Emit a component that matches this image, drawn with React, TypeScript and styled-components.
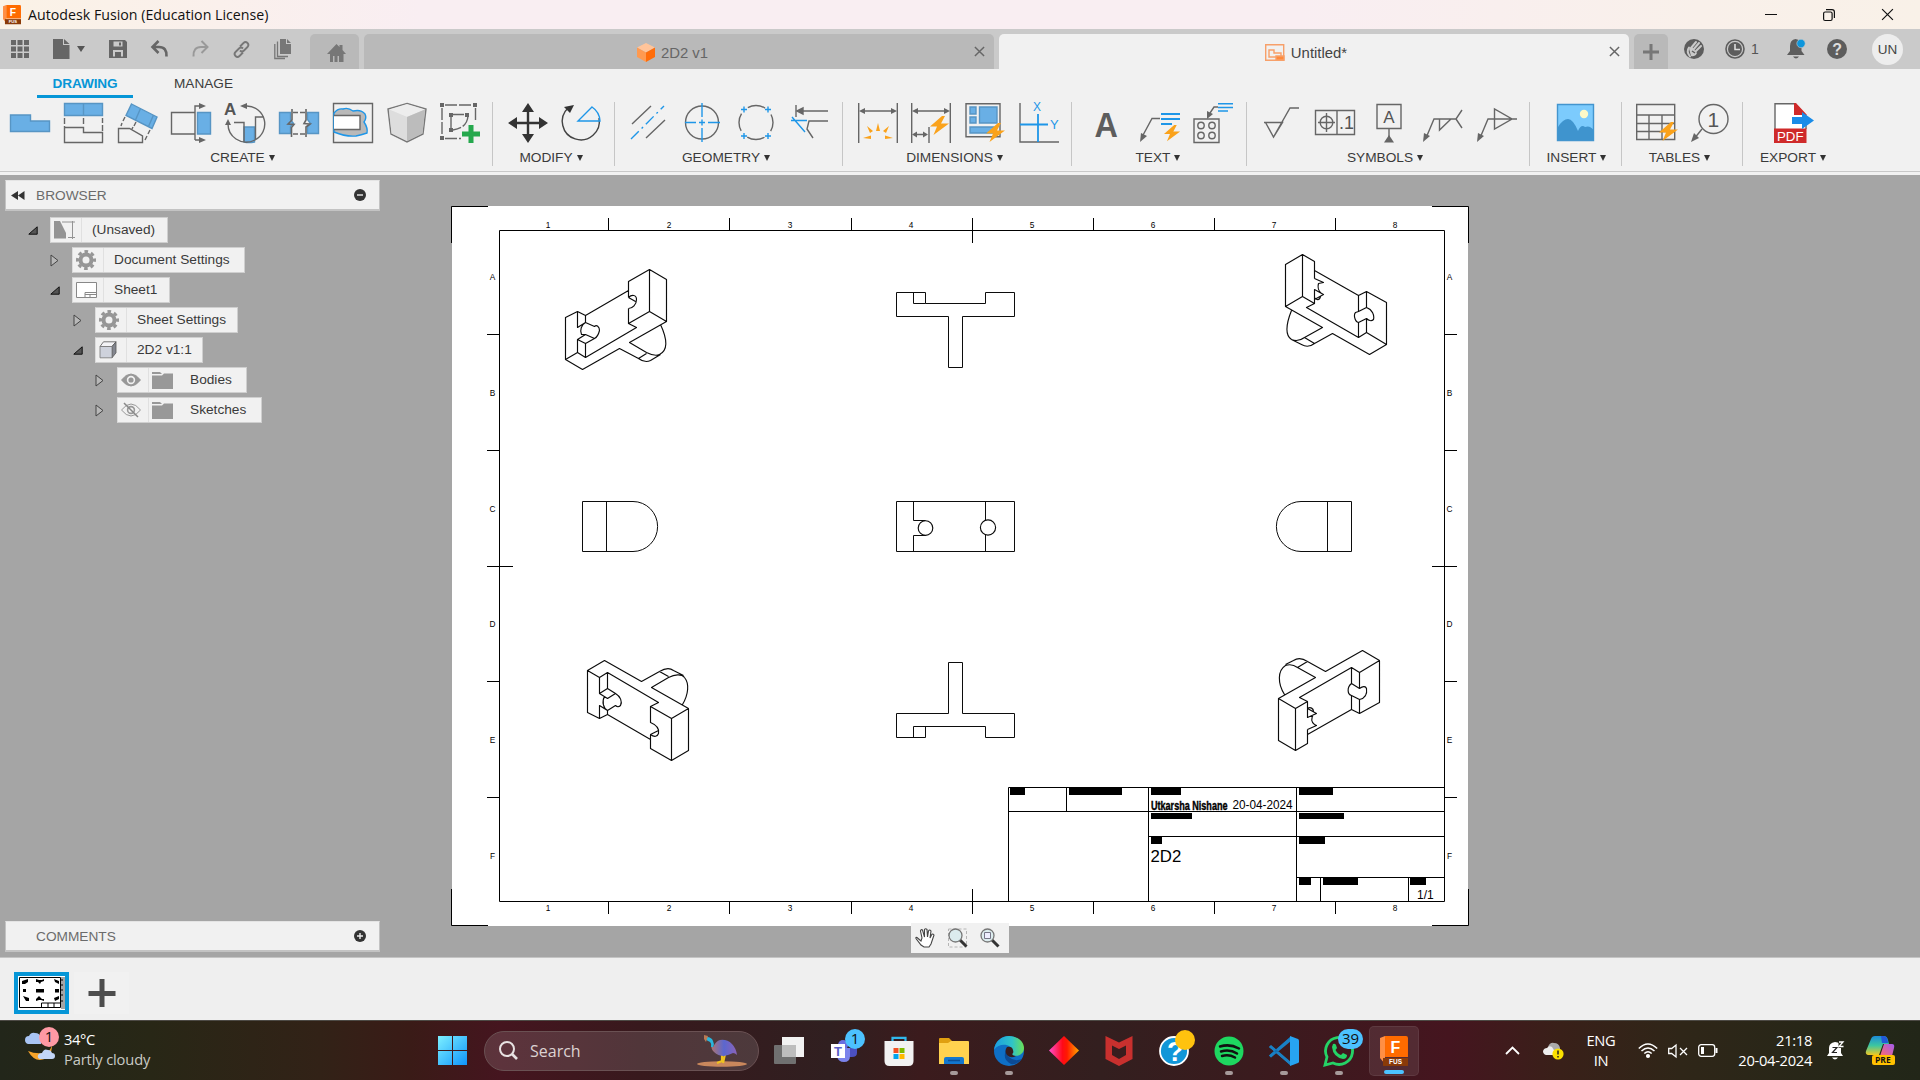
import React from "react";
import styled, { createGlobalStyle } from "styled-components";

const Global = createGlobalStyle`
  * { box-sizing: border-box; }
  body { margin: 0; overflow: hidden; }
  svg { display: block; flex: none; overflow: visible; }
`;

const arial = `"Liberation Sans", Arial, sans-serif`;
const segoe = `"Open Sans", "Noto Sans", sans-serif`;

const G = "#666666";
const B = "#69afe5";
const BD = "#5795c4";
const HB = "#1e96e8";
const O = "#faa21b";

/* ---------- layout ---------- */

const Screen = styled.div`
  width: 1920px;
  height: 1080px;
  display: flex;
  flex-direction: column;
  background: #a5a5a5;
  font-family: ${arial};
  color: #3c3c3c;
`;

const TitleBar = styled.header`
  height: 29px;
  display: flex;
  align-items: center;
  padding-left: 3px;
  background: linear-gradient(90deg, #faf2e6 0, #faf0ec 220px, #f9eef2 420px, #f9eef2 1300px, #f9f0ea 1700px, #f9f1e8 100%);
`;

const TitleText = styled.span`
  margin-left: 7px;
  font: 14.2px ${segoe};
  letter-spacing: 0.01px;
  color: #111;
  flex: 1;
`;

const WindowButton = styled.span`
  width: 58px;
  display: flex;
  justify-content: center;
`;

const TabStrip = styled.div`
  height: 40px;
  display: flex;
  align-items: flex-end;
  background: #cacaca;
`;

const QuickTools = styled.div`
  width: 310px;
  height: 40px;
  padding-left: 10px;
  display: flex;
  align-items: center;
`;

const Quick = styled.span<{ $w: number }>`
  width: ${(p) => p.$w}px;
  flex: none;
`;

const DocTab = styled.div<{ $w: number; $ml?: number; $active?: boolean }>`
  width: ${(p) => p.$w}px;
  margin-left: ${(p) => p.$ml ?? 5}px;
  height: 35px;
  display: flex;
  align-items: center;
  justify-content: center;
  border-radius: 5px 5px 0 0;
  background: ${(p) => (p.$active ? "#f1f1f1" : "#b9b9b9")};
  color: ${(p) => (p.$active ? "#444" : "#666")};
  font-size: 14.9px;
`;

const HomeMark = styled.span`
  padding: 3px 0 0 3px;
`;

const TabName = styled.div<{ $pad: number }>`
  flex: 1;
  display: flex;
  align-items: center;
  justify-content: center;
  gap: 6px;
  padding: 2px 0 0 ${(p) => p.$pad}px;
`;

const TabClose = styled.span`
  width: 20px;
`;

const Account = styled.div`
  height: 40px;
  flex: 1;
  display: flex;
  align-items: center;
  padding-left: 16px;
  font-size: 14px;
  color: #555;
`;

const Avatar = styled.span`
  width: 31px;
  height: 31px;
  border-radius: 50%;
  background: #ededed;
  display: flex;
  align-items: center;
  justify-content: center;
  font-size: 13.5px;
  color: #444;
`;

const Ribbon = styled.section`
  height: 106px;
  background: #f1f1f1;
  position: relative;
  &::after {
    content: "";
    position: absolute;
    left: 0;
    right: 0;
    bottom: 3px;
    height: 1px;
    background: #c8c8c8;
  }
`;

const RibbonTabs = styled.nav`
  height: 29px;
  padding-left: 37px;
  display: flex;
`;

const RibbonTab = styled.span<{ $w: number; $on?: boolean }>`
  width: ${(p) => p.$w}px;
  height: 29px;
  text-align: center;
  line-height: 29px;
  font-size: 13.6px;
  font-weight: ${(p) => (p.$on ? "bold" : "normal")};
  letter-spacing: ${(p) => (p.$on ? "-0.1px" : "0")};
  color: ${(p) => (p.$on ? "#0696d7" : "#3c3c3c")};
  border-bottom: ${(p) => (p.$on ? "3px solid #0696d7" : "0")};
`;

const Groups = styled.div`
  display: flex;
  padding-top: 4px;
`;

const Group = styled.div<{ $w: number; $last?: boolean }>`
  width: ${(p) => p.$w}px;
  height: 64px;
  border-right: ${(p) => (p.$last ? "0" : "1px solid #c6c6c6")};
  display: flex;
  flex-direction: column;
  align-items: center;
`;

const Icons = styled.div<{ $nudge: number }>`
  display: flex;
  gap: 13.8px;
  height: 41px;
  padding-top: 1px;
  margin-left: ${(p) => p.$nudge * 2}px;
`;

const GroupLabel = styled.div<{ $nudge: number }>`
  margin-top: 6px;
  margin-left: ${(p) => p.$nudge * 2}px;
  height: 17px;
  display: flex;
  align-items: center;
  gap: 4px;
  padding-right: 4px;
  font-size: 13.7px;
  color: #3a3a3a;
`;

const Caret = styled.i`
  border: 3.5px solid transparent;
  border-top: 6px solid #333;
  border-bottom: 0;
`;

const Workspace = styled.main`
  height: 782px;
  display: flex;
  position: relative;
  background: #a5a5a5;
`;

const SidePanel = styled.aside`
  width: 451px;
  padding: 5px 71px 5px 5px;
  display: flex;
  flex-direction: column;
`;

const PanelHeader = styled.div`
  height: 31px;
  display: flex;
  align-items: center;
  background: #f1f1f1;
  border: 1px solid #c3c3c3;
  border-bottom-width: 2px;
  border-top-color: #e4e4e4;
  padding-right: 13.5px;
  font-size: 13.7px;
  color: #6b6b6b;
`;

const PanelTitle = styled.span`
  flex: 1;
`;

const PanelLead = styled.span`
  width: 30px;
  padding-left: 5px;
`;

const Tree = styled.div`
  flex: 1;
  padding-top: 6px;
  display: flex;
  flex-direction: column;
  gap: 4px;
`;

const TreeRow = styled.div<{ $indent: number }>`
  height: 26px;
  padding-left: ${(p) => p.$indent}px;
  display: flex;
  align-items: center;
`;

const Expander = styled.span`
  width: 22px;
`;

const Tag = styled.div<{ $w: number }>`
  width: ${(p) => p.$w}px;
  height: 26px;
  background: #f1f1f1;
  border: 1px solid #cfcfcf;
  border-left-color: #dcdcdc;
  display: flex;
  align-items: center;
  font-size: 13.7px;
  color: #3a3a3a;
  white-space: nowrap;
`;

const TagIcon = styled.span<{ $plain?: boolean }>`
  width: 31px;
  height: 24px;
  padding-left: 3px;
  display: flex;
  align-items: center;
  border-right: ${(p) => (p.$plain ? "0" : "1px solid #e0e0e0")};
`;

const TagText = styled.span`
  padding: 0 0 1px 10px;
`;

const NavBar = styled.div`
  position: absolute;
  left: 911px;
  top: 748px;
  width: 98px;
  height: 30px;
  padding-left: 4px;
  display: flex;
  align-items: center;
  gap: 12.5px;
  background: #f1f1f1;
`;

const SheetHolder = styled.div`
  padding-top: 30px;
`;

const SheetBar = styled.footer`
  height: 63px;
  border-top: 1px solid #c4c4c4;
  background: #efefef;
  display: flex;
  align-items: center;
  padding: 0 14px 0;
  gap: 5px;
`;

const Thumb = styled.div`
  width: 55px;
  height: 42px;
  margin-top: 8px;
  border: 4px solid #0696d7;
  background: #fff;
`;

const AddSheet = styled.div`
  width: 55px;
  height: 42px;
  margin-top: 8px;
  background: #f1f1f1;
  display: flex;
  align-items: center;
  justify-content: center;
`;

const Taskbar = styled.footer`
  height: 60px;
  border-top: 1px solid #4d4a45;
  display: flex;
  align-items: center;
  font-family: ${segoe};
  color: #fff;
  background: linear-gradient(90deg, #22261a 0, #282716 150px, #322217 320px, #3a1b17 410px, #45151f 500px, #38191d 640px, #301f20 830px, #3b1b1d 920px, #331f1f 1100px, #3a1b1e 1250px, #45151f 1450px, #392019 1560px, #2f2618 1680px, #232718 1880px, #222618 100%);
`;

const Weather = styled.div`
  width: 433px;
  height: 59px;
  padding: 5px 0 0 25px;
  display: flex;
  gap: 3px;
`;

const WeatherText = styled.div`
  padding-top: 3px;
  font-size: 14.7px;
  line-height: 20px;
  letter-spacing: -0.14px;
  color: #c9cac4;
  b {
    display: block;
    font-weight: normal;
    color: #fff;
    letter-spacing: -0.4px;
  }
`;

const StartBox = styled.div`
  width: 51px;
  padding-left: 5px;
`;

const SearchBox = styled.div`
  width: 275px;
  height: 40px;
  border-radius: 20px;
  border: 1px solid #6a5153;
  background: rgba(255, 255, 255, 0.13);
  display: flex;
  align-items: center;
  padding: 0 10px 0 14px;
  font-size: 16px;
  color: #dcd2d2;
  span {
    flex: 1;
    padding-left: 12px;
  }
`;

const Apps = styled.div`
  display: flex;
  gap: 5px;
  padding-left: 5px;
`;

const AppButton = styled.div<{ $state?: "run" | "on" }>`
  width: 50px;
  height: 50px;
  border-radius: 5px;
  display: flex;
  flex-direction: column;
  align-items: center;
  padding-top: 9px;
  background: ${(p) => (p.$state === "on" ? "rgba(255,255,255,.09)" : "none")};
  border: 1px solid ${(p) => (p.$state === "on" ? "rgba(255,255,255,.07)" : "transparent")};
  gap: 5px;
  &::after {
    content: "";
    width: ${(p) => (p.$state === "on" ? 20 : 8)}px;
    height: 4px;
    border-radius: 2px;
    background: ${(p) => (p.$state === "on" ? "#4cc2ff" : p.$state ? "#a69a9a" : "none")};
  }
`;

const Tray = styled.div`
  flex: 1;
  display: flex;
  align-items: center;
  padding-left: 86px;
`;

const Slot = styled.span<{ $w: number }>`
  width: ${(p) => p.$w}px;
  flex: none;
`;

const TrayText = styled.div<{ $w: number; $align: string }>`
  width: ${(p) => p.$w}px;
  text-align: ${(p) => p.$align};
  font-size: 14.7px;
  line-height: 20px;
  letter-spacing: -0.3px;
  white-space: nowrap;
  padding-bottom: 1px;
`;

/* ---------- drawing sheet ---------- */

/* Converts third-of-a-pixel measurements into strokes centred on pixels. */
const trace = (ox: number, oy: number, d: string) =>
  d.replace(/(-?\d+),(-?\d+)/g, (_, x, y) => `${ox + Math.floor(+x / 3) + 0.5},${oy + Math.floor(+y / 3) + 0.5}`);

const isoViews = [
  trace(440, 200, `M437,347 L413,334 L377,352 L377,478 L428,508 L539,445 L596,476 C606,483 618,487 630,480 L662,463
    M413,334 L413,382 L437,368 L437,347 L566,271 M566,292 L566,244 L628,208 L680,238 L680,364 L628,334 L566,371 L566,326
    M628,208 L628,334 M566,371 L590,382 L437,472 L413,457 L377,478 M680,364 L568,427 L618,456 C630,464 645,468 658,464 C682,452 683,418 662,374
    M594,474 L620,460 M413,457 L413,417 L437,404 L462,416 L437,430 L413,417 M437,430 L437,472
    M437,368 L462,380 C470,373 477,378 477,392 C475,404 470,411 462,416 M437,368 C423,374 419,390 424,402 L437,404
    M566,292 C574,284 590,282 590,298 C588,312 578,326 566,326 M566,292 L586,304`),
  trace(960, 200, `M1063,234 L1063,184 L1027,163 L977,192 L977,320 L1027,289 L1063,310 L1063,268 L1090,283 L1063,298 M1027,163 L1027,289
    M977,320 L1087,382 L1033,412 L1063,430 L1117,400 L1229,463 L1280,433 L1280,306 L1219,274 L1196,286 L1063,211
    M1063,310 L1040,322 L1196,412 L1219,398 L1280,433 M1196,286 L1196,334 M1219,274 L1219,322 M1196,367 L1196,412 M1219,355 L1219,398
    M1196,334 L1219,322 C1236,328 1242,345 1240,358 C1234,363 1226,360 1219,355 L1196,367 C1184,364 1180,344 1187,337 L1196,334
    M1063,234 L1090,247 L1076,250 C1072,262 1076,276 1090,283 M1063,292 C1070,302 1078,300 1082,288
    M993,330 C975,375 975,405 995,418 C1010,424 1022,420 1033,412 M995,418 L1025,434 C1038,441 1050,439 1063,430`),
  trace(440, 560, `M479,475 L443,457 L443,331 L493,301 L604,364 L658,334 C672,324 688,322 700,330 L730,346 M658,334 L686,350
    M443,331 L479,352 L503,338 L656,427 L632,438 L695,474 L746,445 L635,382 L686,352 C704,342 724,341 733,352 C748,370 744,402 728,434
    M479,352 L479,400 L503,386 L503,338 M503,386 L527,400 L503,415 L479,400 M527,400 C540,408 546,425 541,437 C535,441 530,438 526,436 L503,450 C490,445 484,425 492,410
    M503,450 L479,436 L479,475 L503,463 L503,450 M503,463 L632,538 M632,438 L632,488 C645,492 657,505 654,520 C652,530 642,532 632,522 L654,511
    M632,522 L632,566 L695,601 L746,571 L746,445 M695,474 L695,601`),
  trace(980, 620, `M895,235 L947,265 L983,244 L958,232 L1115,142 L1139,157 L1199,121 L1147,91 L1036,154 L982,124 C965,112 950,115 940,120 L915,133
    M983,328 L983,370 L947,391 L895,361 L895,235 L1006,172 L952,142 C940,133 925,132 915,136 C892,152 893,190 912,223 M947,265 L947,391 M952,142 L982,124
    M983,244 L983,292 L1008,280 L983,266 C990,258 1000,264 1001,274 M1001,284 C992,296 994,308 1002,314 L1010,315 L983,328
    M983,343 L1115,268 L1139,280 L1199,247 L1199,121 M1115,142 L1115,190 L1139,205 L1139,157 M1115,227 L1115,268 M1139,238 L1139,280
    M1139,205 C1146,198 1156,196 1159,206 C1162,222 1152,236 1139,238 L1115,227 C1102,222 1100,202 1115,190`),
];

const orthoViews = `M896.5 292.5H925.5V303.5H985.5V292.5H1014.5V316.5H962.5V367.5H948.5V316.5H896.5Z M913.5 292.5V303.5H925.5
  M896.5 501.5H1014.5V551.5H896.5Z M913.5 501.5V520.5H925.5 M925.5 535.5H913.5V551.5 M985.5 501.5V520.5 M985.5 534.5V551.5
  M948.5 662.5H962.5V713.5H1014.5V737.5H985.5V726.5H913.5V737.5 M948.5 662.5V713.5H896.5V737.5H925.5V726.5
  M633 501.5H582.5V551.5H633A24.6 25 0 0 0 633 501.5 M606.5 501.5V551.5
  M1301 501.5H1351.5V551.5H1301A24.6 25 0 0 1 1301 501.5 M1327.5 501.5V551.5`;

const cols = [608.5, 729.5, 851.5, 972.5, 1093.5, 1214.5, 1335.5];
const rows = [334.5, 450.5, 566.5, 681.5, 797.5];

const frame =
  `M499.5 230.5H1444.5V901.5H499.5Z` +
  cols.map((x) => `M${x} 218V${x === 972.5 ? 243 : 230}M${x} ${x === 972.5 ? 889 : 901}V914`).join("") +
  rows.map((y) => `M487 ${y}H${y === 566.5 ? 513 : 499}M${y === 566.5 ? 1432 : 1444} ${y}H1457`).join("") +
  `M451.5 243V206.5H488 M1432 206.5H1468.5V243 M451.5 889V925.5H488 M1432 925.5H1468.5V889` +
  `M1008.5 901V787.5H1444 M1008.5 811.5H1444 M1148.5 836.5H1444 M1296.5 877.5H1444 M1066.5 787V811 M1148.5 787V901 M1296.5 787V901 M1320.5 877V901 M1408.5 877V901`;

const blocks = [
  [1010, 788, 15, 7], [1069, 788, 53, 7], [1151, 788, 30, 7], [1299, 788, 34, 7],
  [1151, 813, 41, 6], [1299, 813, 45, 6], [1151, 837, 11, 7], [1299, 837, 26, 7],
  [1299, 878, 12, 7], [1323, 878, 35, 7], [1410, 878, 16, 7],
];

const Sheet = () => (
  <svg width="1019" height="722" viewBox="451 205 1019 722" fontFamily={arial} fill="#000">
    <rect x="452" y="206" width="1016" height="720" fill="#fff" />
    <path d={frame} fill="none" stroke="#000" />
    <path d={orthoViews} fill="none" stroke="#0c0c0c" />
    <g fill="none" stroke="#0c0c0c" strokeWidth="1.15" strokeLinejoin="round">
      <circle cx="925.5" cy="528" r="7.3" />
      <circle cx="988" cy="527.5" r="7.6" />
      {isoViews.map((d, i) => <path key={i} d={d} />)}
    </g>
    {blocks.map(([x, y, w, h]) => <rect key={`${x}-${y}`} x={x} y={y} width={w} height={h} />)}
    <g fontSize="8.3" textAnchor="middle">
      {[1, 2, 3, 4, 5, 6, 7, 8].map((n) => (
        <React.Fragment key={n}>
          <text x={427 + n * 121} y="228">{n}</text>
          <text x={427 + n * 121} y="911">{n}</text>
        </React.Fragment>
      ))}
      {["A", "B", "C", "D", "E", "F"].map((c, i) => (
        <React.Fragment key={c}>
          <text x="492.5" y={280 + i * 115.8}>{c}</text>
          <text x="1449.5" y={280 + i * 115.8}>{c}</text>
        </React.Fragment>
      ))}
    </g>
    <text transform="translate(1151 809.500) scale(.755 1)" fontSize="12" fontWeight="bold" stroke="#000" strokeWidth=".4">Utkarsha Nishane</text>
    <text transform="translate(1232.5 809) scale(.98 1)" fontSize="12">20-04-2024</text>
    <text x="1150.5" y="862" fontSize="16.8">2D2</text>
    <text x="1417" y="899" fontSize="12">1/1</text>
  </svg>
);

/* ---------- ribbon icons ---------- */

const I = ({ children }: { children: React.ReactNode }) => (
  <svg width="40" height="40" viewBox="0 0 40 40" fill="none" stroke={G} strokeWidth="1.4" fontFamily={arial}>{children}</svg>
);
const Bolt = ({ x, y }: { x: number; y: number }) => (
  <path transform={`translate(${x} ${y})`} d="M12 0 0 10.5h7L3.5 19 19 7.5h-8L15 0Z" fill={O} stroke="none" />
);

const create = [
  <I><path d="M.5 12h20v6h19v10.5H.5Z" fill={B} stroke={BD} /></I>,
  <I>
    <path d="M.5.5h38v12H.5ZM19.5.5v12" fill={B} stroke={BD} />
    <path d="M.5 15v6m0 3v-1M19.5 15v6m19-6v5m0 2v6M.5 24.5h19v5h19v10H.5Z" />
  </I>,
  <I>
    <path d="M13.5 1 39 14l-5 11.5L8 12.5ZM22.5 5.5l-5 11.5M35.5 12l-5 11.5" fill={B} stroke={BD} />
    <path d="M.5 25.5h11l13 7.5v6.5H.5ZM7 14l-2 4m-1 2-1 3M18 19l-2 4m-1 1-1 2M32 27l-2 4m-1 2-2 4" />
  </I>,
  <I>
    <path d="M23.5 9.5H.5V31h23M24 37V3h6M24 37h6" />
    <path d="M26.5 9.5h13V31h-13Z" fill={B} stroke={BD} />
    <path d="m28 0 7 3-7 3Zm0 34 7 3-7 3Z" fill={G} stroke="none" />
  </I>,
  <I>
    <path d="M19 24h10.5v15q-6 1-10.5 0Z" fill={B} stroke={BD} />
    <path d="M22 3a18 18 0 0 1 8 34q-10 5-19-1a18 18 0 0 1-8-15M9 19.5h10V39M39 14h-8.5v23" />
    <path d="m22 0-7 3 7 3ZM0 22l3-6 3 6Z" fill={G} stroke="none" />
    <text x="-1" y="12" fontSize="17" fontWeight="bold" fill="#555" stroke="none">A</text>
  </I>,
  <I>
    <path d="M.5 9.5h11v7l3 4-3 3v7H.5ZM39.5 9.5h-11v7l3 4-3 3v7h11Z" fill={B} stroke={BD} />
    <path d="M13 6v11l-4 4 6 .5-2.5 3V34M27 6v11l-2 3.5 6 .5-4 3V34" strokeWidth="1.6" />
    <path d="M14 9.5h12M14 31h12" strokeDasharray="5 2" />
  </I>,
  <I>
    <path d="M.5.5h39v39H.5Z" />
    <path d="M1 10q4-5 9-4 5-2 10 2 8-2 12 3 2 4-1 8 4 6 3 11-6 2-11 3Q13 34 1 29Z" fill="#b9b9b9" stroke={HB} />
    <path d="M1 12.5h26v14H1" fill="#fff" />
  </I>,
  <I>
    <path d="M20 .5 39 6l-3 25-16 8L4 31 1 6Z" fill="#d4d4d4" stroke="#777" />
    <path d="M2 6.5 20 14v24L4.5 30.5Z" fill="#ddd" stroke="none" />
    <path d="M20 1 38 6.5 20 14 2 6.5Z" fill="#ededed" stroke="none" />
    <path d="M38 6.5 20 14v24l15.5-7.5Z" fill="#bcbcbc" stroke="none" />
  </I>,
  <I>
    <path d="M5 2h27M2 5v27M35.5 5v14M5 35.5h16M12 11.5h14M11 13v13M28 13q-1 12-15 14" strokeDasharray="12 2" />
    <path d="M0 0h4v4H0ZM33 0h4v4h-4ZM0 33h4v4H0ZM9 10h4v4H9ZM25 10h4v4h-4ZM9 25h4v4H9Z" fill={G} stroke="none" />
    <path d="M31 22v18M22 31h18" stroke="#25a84d" strokeWidth="5" />
  </I>,
];

const modify = [
  <I>
    <path d="M20 5v30M5 20h30" stroke="#333" strokeWidth="2.4" />
    <path d="m20 0 6 9H14ZM20 40l6-9H14ZM0 20l9-6v12ZM40 20l-9-6v12Z" fill="#333" stroke="none" />
  </I>,
  <I>
    <path d="M7 5A18.5 18.5 0 1 0 38 15" stroke="#444" />
    <path d="m3 4 10-2-4 8Z" fill="#333" stroke="none" />
    <path d="M31 4 17 18h22A18 18 0 0 0 31 4Z" stroke={HB} />
  </I>,
];

const geometry = [
  <I>
    <path d="M4 21 23 3M18 35 37 17" />
    <path d="M3 36 36 3" stroke={HB} strokeDasharray="11 4 2 4" />
  </I>,
  <I>
    <circle cx="20" cy="19.5" r="16.5" />
    <path d="M20 0v14M20 25v14M3 19.5h11M26 19.5h12M17 19.5h6M20 16.5v6" stroke={HB} />
  </I>,
  <I>
    <circle cx="21" cy="19.5" r="17" strokeDasharray="18 8.7" strokeDashoffset="9" />
    <path d="M6 6.5h6M9 3.5v6M30 6.5h6M33 3.5v6M6 33h6M9 30v6M30 33h6M33 30v6" stroke={HB} />
  </I>,
  <I>
    <path d="M7 2v12M10 8h29M39 18H20l-2 8 6 9" />
    <path d="m8 8 6-3v6Z" fill={G} />
    <path d="M2 17.5h16M3 14l13 15" stroke={HB} />
  </I>,
];

const dimensions = [
  <I>
    <path d="M.7 0v40M39.3 0v40M4 8h32" />
    <path d="m1 8 6-3v6ZM39 8l-6-3v6Z" fill={G} stroke="none" />
    <path d="m20 20-2 8h4ZM9 23l3 7 3-2ZM31 23l-6 5 3 2ZM5 35l8-2.500V36ZM35 35l-8-2.500V36Z" fill={O} stroke="none" />
  </I>,
  <I>
    <path d="M.7 0v40M39.3 0v40M4 8h32M18 24v16M4 31.5h10" />
    <path d="m1 8 6-3v6ZM39 8l-6-3v6ZM1 31.5l5-3v6ZM17 31.5l-5-3v6Z" fill={G} stroke="none" />
    <Bolt x={19} y={13} />
  </I>,
  <I>
    <path d="M1 .7h34v33H1Z" />
    <path d="M5 4h6v7H5ZM14.5 4H32v16H14.5ZM5 14h6v6H5ZM5 24h24v6H5Z" fill={B} stroke={BD} />
    <Bolt x={21} y={20} />
  </I>,
  <I>
    <path d="M1 0v39h39" />
    <path d="M1 21.5h28M19 11v28" stroke={HB} strokeWidth="1.8" />
    <text x="14" y="8" fontSize="12" fill={HB} stroke="none">X</text>
    <text x="31" y="26" fontSize="13" fill={HB} stroke="none">Y</text>
  </I>,
];

const textIcons = [
  <I><text transform="translate(8.5 34) scale(.9 1)" fontSize="36" fontWeight="bold" fill="#5d5d5d" stroke="none">A</text></I>,
  <I>
    <path d="M2 34 12 15.5h8" />
    <path d="m0 39 1-9 6 3Z" fill={G} stroke="none" />
    <path d="M21 11h19M21 16h19M21 21h11" stroke={HB} strokeWidth="2.2" />
    <g transform="translate(24 22) scale(.85)"><Bolt x={0} y={0} /></g>
  </I>,
  <I>
    <path d="M1 16h25v23.5H1ZM17 10l4-6h4" />
    <path d="m14 16 0-8 6 3Z" fill={G} stroke="none" />
    <circle cx="8" cy="22.5" r="3.2" /><circle cx="19" cy="22.5" r="3.2" />
    <circle cx="8" cy="32.5" r="3.2" /><circle cx="19" cy="32.5" r="3.2" />
    <path d="M25 .8h15M25 4.5h15M25 8h10" stroke={HB} strokeWidth="1.6" />
  </I>,
];

const symbols = [
  <I><path d="M3 19.5h18.500L12.500 34 4.500 19.5M12.500 34 29 5h9" /></I>,
  <I>
    <path d="M.5 7.500h39v24H.5ZM22 7.500v24M11.500 10v19M3 19.500h17" />
    <circle cx="11.5" cy="19.5" r="6.3" />
    <text x="24" y="26" fontSize="18" fill="#555" stroke="none">.1</text>
  </I>,
  <I>
    <path d="M8 1.5h24v24H8ZM20 25.5V35" />
    <path d="m20 32 5 7.5H15Z" fill={G} stroke="none" />
    <text x="14.2" y="20" fontSize="17" fill="#555" stroke="none">A</text>
  </I>,
  <I>
    <path d="M3 35 11 16h22l6-9M33 16l6 9M16.5 16v11L28 16" />
    <path d="m0 39 1-9 6 3Z" fill={G} stroke="none" />
  </I>,
  <I>
    <path d="M3 35 11 16h29M17.5 6v20L35 16Z" />
    <path d="m0 39 1-9 6 3Z" fill={G} stroke="none" />
  </I>,
];

const insert = [
  <I>
    <path d="M1.5 1.5h36v36h-36Z" fill="#7ccbfd" stroke="#4395ce" />
    <path d="M2 24Q7 16 12 16t10 12q3-7 7-4 5-2 8.500 3v10H2Z" fill="#3f94ce" stroke="none" />
    <circle cx="28" cy="11" r="4.2" fill="#fdf9c8" stroke="none" />
  </I>,
];
const tables = [
  <I>
    <path d="M.7 1.5h38v35H.7ZM.7 12h38M.7 20.5h38M.7 28.5h38M13 12v24.5M26 12v24.5" />
    <Bolt x={23} y={19} />
  </I>,
  <I>
    <circle cx="23.5" cy="16" r="14.5" />
    <path d="M4 36 12 26" />
    <path d="m1 39 3-9 5 5Z" fill={G} stroke="none" />
    <text x="17.5" y="23.5" fontSize="21" fill="#555" stroke="none">1</text>
  </I>,
];
const exportIcons = [
  <I>
    <path d="M1 40V.7h20l11 12V26" fill="#fff" />
    <path d="M20 0h2l11 12h-13Z" fill="#cf2a2a" stroke="none" />
    <path d="M0 25.5h32.5V40H0Z" fill="#cf2a2a" stroke="none" />
    <path d="M18 14h10V9l12 8.5L28 26v-5H18Z" fill="#1a8ce8" stroke="none" />
    <text x="3" y="37.5" fontSize="13.3" fill="#fff" stroke="none">PDF</text>
  </I>,
];

/* name, width, icons, icon nudge, label nudge */
const groups: [string, number, React.ReactNode[], number, number][] = [
  ["CREATE", 493, create, -0.8, -1.5],
  ["MODIFY", 122, modify, 1, -0.5],
  ["GEOMETRY", 228, geometry, 0, -0.5],
  ["DIMENSIONS", 229, dimensions, 1.2, -0.5],
  ["TEXT", 175, textIcons, 0.6, 1],
  ["SYMBOLS", 283, symbols, 1, -1],
  ["INSERT", 92, insert, 0, 3],
  ["TABLES", 121, tables, 1.2, -0.5],
  ["EXPORT", 102, exportIcons, -0.5, 1],
];

/* ---------- small icons ---------- */

const Fusion = ({ s }: { s: number }) => (
  <svg width={s} height={s * 1.07} viewBox="0 0 28 30">
    <path d="M0 2 5 0v28L0 22Z" fill="#ff8f45" />
    <path d="M5 0h21q2 0 2 2v19H5Z" fill="#ff6b00" />
    <path d="M3 22h25v8H3Z" fill="#8a3a08" />
    <text x="10.5" y="17" fontFamily={arial} fontWeight="bold" fontSize="16" fill="#fff">F</text>
    <text x="9" y="28.5" fontFamily={arial} fontWeight="bold" fontSize="6.5" fill="#fff">FUS</text>
  </svg>
);

const X = ({ s = 11, c = "#666", w = 1.6 }) => (
  <svg width={s} height={s} viewBox="0 0 12 12"><path d="m1 1 10 10M11 1 1 11" stroke={c} strokeWidth={w} /></svg>
);

const Open = () => (
  <svg width="10" height="9" viewBox="0 0 10 9"><path d="M9.2.8v7.400H.8Z" fill="#555" stroke="#111" /></svg>
);
const Closed = () => (
  <svg width="9" height="13" viewBox="0 0 9 13"><path d="M1 1v11l7-5.5Z" fill="#b8b8b8" stroke="#444" /></svg>
);
const Gear = () => (
  <svg width="20" height="20" viewBox="0 0 20 20">
    <circle cx="10" cy="10" r="5.5" fill="none" stroke="#969696" strokeWidth="4" />
    <circle cx="10" cy="10" r="8.5" fill="none" stroke="#969696" strokeWidth="3" strokeDasharray="3.6 3.076" strokeDashoffset="1.8" />
  </svg>
);
const Folder = () => (
  <svg width="21" height="17" viewBox="0 0 21 17"><path d="M0 0h8l2 2H0ZM0 3.5h10L12 1.5h9V17H0Z" fill="#989898" /></svg>
);
const Eye = ({ off }: { off?: boolean }) => (
  <svg width="20" height="14" viewBox="0 0 20 14">
    <path d="M.5 7Q10-5 19.500 7 10 19 .5 7Z" fill={off ? "none" : "#989898"} stroke="#989898" />
    <circle cx="10" cy="7" r="3.4" fill={off ? "none" : "#989898"} stroke={off ? "#989898" : "#f1f1f1"} strokeWidth="1.6" />
    {off && <path d="m3 0 14 14" stroke="#888" strokeWidth="1.5" />}
  </svg>
);
const DocIcon = () => (
  <svg width="21" height="18" viewBox="0 0 21 18">
    <path d="M0 0h6l6 12v5.5H0Z" fill="#949494" />
    <path d="M8 1h13M14 16.5h7M18.5 0v18" stroke="#949494" fill="none" />
  </svg>
);
const SheetIcon = () => (
  <svg width="21" height="16" viewBox="0 0 21 16">
    <path d="M.5.5h20v15H.5Z" fill="#fff" stroke="#888" />
    <path d="M9 15v-4.5h11M9 12.5h11M14 12.5V15" stroke="#888" fill="none" />
  </svg>
);
const BodyIcon = () => (
  <svg width="18" height="18" viewBox="0 0 18 18">
    <path d="M1 5.5 4.5.8H17L13 5.5Z" fill="#f3f3f6" stroke="#555" strokeWidth=".8" />
    <path d="M17 .8v11l-4 5V5.5Z" fill="#83868f" stroke="#555" strokeWidth=".8" />
    <path d="M1 5.5h12v11.3H1Z" fill="#ced2dc" stroke="#777" strokeWidth=".8" />
  </svg>
);
const Round = ({ plus }: { plus?: boolean }) => (
  <svg width="12" height="12" viewBox="0 0 12 12">
    <circle cx="6" cy="6" r="6" fill="#333" />
    <path d={plus ? "M3 6h6M6 3v6" : "M3 6h6"} stroke="#eee" strokeWidth="1.4" />
  </svg>
);

const tree: { indent: number; open?: boolean; w: number; label: string; icon?: React.ReactNode; eye?: "on" | "off" }[] = [
  { indent: 23, open: true, w: 118, label: "(Unsaved)", icon: <DocIcon /> },
  { indent: 45, w: 173, label: "Document Settings", icon: <Gear /> },
  { indent: 45, open: true, w: 98, label: "Sheet1", icon: <SheetIcon /> },
  { indent: 68, w: 143, label: "Sheet Settings", icon: <Gear /> },
  { indent: 68, open: true, w: 108, label: "2D2 v1:1", icon: <BodyIcon /> },
  { indent: 90, w: 130, label: "Bodies", eye: "on" },
  { indent: 90, w: 145, label: "Sketches", eye: "off" },
];

const Lens = ({ win }: { win?: boolean }) => (
  <svg width="20" height="20" viewBox="0 0 20 20">
    {win && <path d="M.5 1h18v18H.5Z" fill="none" stroke="#b5b5b5" strokeDasharray="3 2" />}
    <path d="m12 12 6.5 6.5" stroke="#333" strokeWidth="3" />
    <circle cx="7.5" cy="7.5" r="6.5" fill="#dcecee" stroke="#777" strokeWidth="1.3" />
    {!win && <path d="M4.5 4.5h6v6h-6Z" fill="#eef" stroke="#778" />}
  </svg>
);

/* ---------- taskbar icons ---------- */

const T = ({ children }: { children: React.ReactNode }) => (
  <svg width="30" height="30" viewBox="0 0 30 30">{children}</svg>
);

const Badge = ({ x, y, w, n, c, f = 15 }: { x: number; y: number; w: number; n: string; c: string; f?: number }) => (
  <g>
    <rect x={x} y={y} width={w} height="20" rx="10" fill={c} />
    <text x={x + w / 2} y={y + 15.3} textAnchor="middle" fontSize={f} fill="#111" fontFamily={segoe}>{n}</text>
  </g>
);

const apps: { icon: React.ReactNode; state?: "run" | "on" }[] = [
  { icon: <T>
    <path d="M8 1h22v20H8Z" fill="#f2f2f2" />
    <rect x="0" y="9" width="22" height="19" rx="1" fill="#707070" />
    <path d="M8 9h14v12H8Z" fill="#bdbdbd" />
  </T> },
  { icon: <T>
    <circle cx="14" cy="9" r="5" fill="#6a6fe0" /><path d="M15 12h13v5q0 4-5 4H13Z" fill="#4b50c0" />
    <path d="M8 12h13v8q0 6-6 6t-7-6Z" fill="#7b83eb" />
    <path d="M2 8h14v14H2Z" fill="#fff" />
    <text x="5" y="19.5" fontFamily={arial} fontWeight="bold" fontSize="13" fill="#5a5fc8">T</text>
    <Badge x={16} y={-7} w={20} n="1" c="#4cc2ff" />
  </T> },
  { icon: <T>
    <path d="M8.5 7V1.8h13V7" fill="none" stroke="#30b8ec" strokeWidth="2.2" />
    <path d="M.5 5h29v20q0 5-5 5h-19q-5 0-5-5Z" fill="#f2f2f2" />
    <path d="M9.5 12h5v5h-5Z" fill="#f25022" /><path d="M15.5 12h5v5h-5Z" fill="#7fba00" />
    <path d="M9.5 18h5v5h-5Z" fill="#00a4ef" /><path d="M15.5 18h5v5h-5Z" fill="#ffb900" />
  </T> },
  { state: "run", icon: <T>
    <path d="M0 3q0-1 1-1h9l3 3v4H0Z" fill="#e0a010" /><path d="M0 7h9l3-2h17q1 0 1 1v22H0Z" fill="#ffd24f" />
    <path d="M5 28v-5q0-2 2-2h16q2 0 2 2v5Z" fill="#1377cf" /><path d="M9 24.5h12" stroke="#0b4f96" strokeWidth="1.5" />
  </T> },
  { state: "run", icon: <T>
    <defs><linearGradient id="edge" x1="0" x2="1"><stop stopColor="#1b9de2" /><stop offset=".6" stopColor="#2fc3c8" /><stop offset="1" stopColor="#6be055" /></linearGradient></defs>
    <circle cx="15" cy="15" r="15" fill="#0f6fc6" />
    <path d="M0 14C1 5 8 0 15 0c9 0 15 6 15 12 0 5-4 8-9 8-3 0-4-1-3-3 3-8-12-12-18-3Z" fill="url(#edge)" />
    <path d="M12 14q-4 10 5 14 6 1 11-5-8 3-13-2-3-3-3-7Z" fill="#0c4a94" />
    <path d="M19 14q1 3-1 4 1 2 4 2-5 3-9-1-3-4 0-8 5-1 6 3Z" fill="#381d1e" />
  </T> },
  { icon: <T>
    <defs><linearGradient id="dia"><stop stopColor="#ff4fd0" /><stop offset=".45" stopColor="#ff0a18" /><stop offset=".6" stopColor="#ff1a00" /><stop offset="1" stopColor="#ffa800" /></linearGradient></defs>
    <path d="m15 0 15 14.5L15 29 0 14.5Z" fill="url(#dia)" />
  </T> },
  { icon: <T>
    <path d="m1.5 0 13.5 6.5L28.5 0v23L15 30 1.5 23Z" fill="#c8302e" />
    <path d="M8 9.5 15 13l7-3.5v9.5l-7 4-7-4Z" fill="#381d1e" />
  </T> },
  { icon: <T>
    <circle cx="15" cy="15" r="14" fill="#1096d8" stroke="#fff" strokeWidth="1.8" />
    <text x="8" y="25" fontFamily={arial} fontWeight="bold" fontSize="27" fill="#fff">?</text>
    <circle cx="26" cy="4" r="10" fill="#ffc20e" />
  </T> },
  { state: "run", icon: <T>
    <circle cx="15" cy="15" r="14.5" fill="#1ed760" />
    <path d="M6 10.5q10-3 19 2M7 15.5q9-2.5 16 2M8 20q7-2 13 1.5" fill="none" stroke="#111" strokeWidth="2.5" strokeLinecap="round" />
  </T> },
  { state: "run", icon: <T>
    <path d="M2 9.5 22 27l-1 2L0 11Z" fill="#2489ca" /><path d="M2 21.5 22 3l-1-2L0 19.5Z" fill="#1070b3" />
    <path d="m0 11 2-2 20 17v3.5ZM0 19.5l2 2L22 5V.5Z" fill="#1a80c4" />
    <path d="m21 0 8 3q1 .5 1 1.5v21q0 1-1 1.5l-8 3Z" fill="#27a4f2" />
  </T> },
  { state: "run", icon: <T>
    <path d="m1 29 2-8A13.5 13.5 0 1 1 9 27Z" fill="none" stroke="#25d366" strokeWidth="2.8" />
    <path d="M9 8q2-1 3 1l1 3-1.5 2q2 4 5.5 5l2-2 4 2q0 4-4 4Q9 21 8 11Z" fill="#25d366" />
    <Badge x={14} y={-7} w={25} n="39" c="#4cc2ff" />
  </T> },
  { state: "on", icon: <Fusion s={28} /> },
];

export default function App() {
  return (
    <Screen>
      <Global />
      <TitleBar>
        <Fusion s={18} />
        <TitleText>Autodesk Fusion (Education License)</TitleText>
        <WindowButton><svg width="12" height="12" viewBox="0 0 12 12"><path d="M0 5.5h12" stroke="#111" /></svg></WindowButton>
        <WindowButton>
          <svg width="12" height="12" viewBox="0 0 12 12" fill="none" stroke="#111" strokeWidth="1.2">
            <rect x=".6" y="3" width="8.5" height="8.5" rx="1.5" /><path d="M3 .6h6q2.4 0 2.4 2.4v6" />
          </svg>
        </WindowButton>
        <WindowButton><X s={13} c="#111" w={1.1} /></WindowButton>
        <Slot $w={4} />
      </TitleBar>

      <TabStrip>
        <QuickTools>
          <Quick $w={43}>
            <svg width="19" height="18" viewBox="0 0 19 18" fill={G}>
              {[0, 1, 2].flatMap((r) => [0, 1, 2].map((c) => <rect key={`${r}${c}`} x={1 + c * 6.5} y={r * 6.5} width="5" height="5" />))}
            </svg>
          </Quick>
          <Quick $w={24}><svg width="17" height="20" viewBox="0 0 17 20"><path d="M0 0h10v6h6.5v14H0ZM11 0l5.5 5H11Z" fill={G} /></svg></Quick>
          <Quick $w={32}><svg width="8" height="6" viewBox="0 0 8 6"><path d="M0 0h8L4 6Z" fill="#555" /></svg></Quick>
          <Quick $w={42}>
            <svg width="18" height="18" viewBox="0 0 18 18"><path d="M0 0h16l2 2v16H0Z" fill={G} /><path d="M4.5 1.5h9v5h-9ZM4 10h10v6.5H4Z" fill="#cacaca" /><path d="M10 2.5h2v3h-2ZM6 12h6v5H6Z" fill={G} /></svg>
          </Quick>
          <Quick $w={41}><svg width="17" height="16" viewBox="0 0 17 16"><path d="M2 6h6q8 0 7.5 9.5M7.5 0 1.5 6l6 6" fill="none" stroke={G} strokeWidth="2.6" /></svg></Quick>
          <Quick $w={41}><svg width="17" height="16" viewBox="0 0 17 16"><path d="M15 6H9q-8 0-7.5 9.5M9.5 0l6 6-6 6" fill="none" stroke="#999" strokeWidth="2" /></svg></Quick>
          <Quick $w={41}>
            <svg width="17" height="17" viewBox="0 0 17 17" fill="none" stroke="#777" strokeWidth="1.8">
              <path d="m7 5.5 3.5-3.5q2-2 4 0t0 4L11 9.5q-2 2-4 0M10 11.5 6.5 15q-2 2-4 0t0-4L6 7.5q2-2 4 0" />
            </svg>
          </Quick>
          <Quick $w={20}>
            <svg width="17" height="20" viewBox="0 0 17 20">
              <path d="M6 0h6v5h5v10H6ZM13 0l4 4h-4Z" fill="#777" />
              <path d="M3.5 2.5v15H14M.8 5v14.5H11" fill="none" stroke="#777" strokeWidth="1.3" />
            </svg>
          </Quick>
        </QuickTools>
        <DocTab $w={49} $ml={0}>
          <HomeMark>
            <svg width="19" height="18" viewBox="0 0 19 18"><path d="M0 10 9.5 0l3 3V1h3v5L19 10h-2.5v8H12v-6h-1.5v6h-3v-6H6v6H3v-8Z" fill="#777" /></svg>
          </HomeMark>
        </DocTab>
        <DocTab $w={630}>
          <TabName $pad={7}>
            <svg width="18" height="19" viewBox="0 0 18 19"><path d="m9 0 9 4.5L9 9.5 0 4.5Z" fill="#ffc49a" /><path d="M0 4.5 9 9.5V19l-9-5Z" fill="#ff9a50" /><path d="M18 4.5 9 9.5V19l9-5Z" fill="#ff6d0a" /></svg>
            2D2 v1
          </TabName>
          <TabClose><X /></TabClose>
        </DocTab>
        <DocTab $w={630} $active>
          <TabName $pad={4}>
            <svg width="20" height="17" viewBox="0 0 20 17" fill="none" stroke="#f7a06a" strokeWidth="1.4"><path d="M.7.7h18v15.6H.7ZM4 6h5v3h7v4H4Z" /><path d="M11 12h8v4h-8Z" fill="#ff8a3c" /></svg>
            Untitled*
          </TabName>
          <TabClose><X /></TabClose>
        </DocTab>
        <DocTab $w={34}>
          <svg width="16" height="16" viewBox="0 0 16 16"><path d="M8 0v16M0 8h16" stroke="#777" strokeWidth="3" /></svg>
        </DocTab>
        <Account>
          <Slot $w={41}>
            <svg width="20" height="20" viewBox="0 0 20 20">
              <circle cx="10" cy="10" r="10" fill="#5d5d5d" />
              <path d="M6 17.500q-4-5-1-9M7 9l5-6M9 11l6-7M11 13l6-6" fill="none" stroke="#cacaca" strokeWidth="2" strokeLinecap="round" />
              <path d="M5 9.500 8 8l5 6q-2 4-6 3Z" fill="#cacaca" />
              <path d="M8 12l3 2" stroke="#5d5d5d" strokeWidth="1.500" />
            </svg>
          </Slot>
          <Slot $w={26}>
            <svg width="20" height="20" viewBox="0 0 20 20"><circle cx="10" cy="10" r="9" fill="#cacaca" stroke="#5d5d5d" strokeWidth="1.6" /><circle cx="10" cy="10" r="7" fill="#5d5d5d" /><path d="M10 5v5.5h5" fill="none" stroke="#ddd" strokeWidth="1.6" /></svg>
          </Slot>
          <Slot $w={36}>1</Slot>
          <Slot $w={40}>
            <svg width="18" height="20" viewBox="0 0 18 20"><path d="M8.5 0q6 1 6 7v5l3 4H0l3-4V7q0-6 5.5-7ZM6 17.5h6q-3 4-6 0Z" fill="#5d5d5d" /><circle cx="14" cy="4.5" r="4.2" fill="#0d96dc" stroke="#cacaca" strokeWidth=".6" /></svg>
          </Slot>
          <Slot $w={45}>
            <svg width="20" height="20" viewBox="0 0 20 20"><circle cx="10" cy="10" r="10" fill="#5d5d5d" /><text x="5.3" y="16" fontFamily={arial} fontWeight="bold" fontSize="16" fill="#ddd">?</text></svg>
          </Slot>
          <Avatar>UN</Avatar>
        </Account>
      </TabStrip>

      <Ribbon>
        <RibbonTabs>
          <RibbonTab $w={96} $on>DRAWING</RibbonTab>
          <RibbonTab $w={141}>MANAGE</RibbonTab>
        </RibbonTabs>
        <Groups>
          {groups.map(([name, w, icons, iconNudge, labelNudge], i) => (
            <Group key={name} $w={w} $last={i === groups.length - 1}>
              <Icons $nudge={iconNudge}>{icons.map((ic, k) => <React.Fragment key={k}>{ic}</React.Fragment>)}</Icons>
              <GroupLabel $nudge={labelNudge}>{name}<Caret /></GroupLabel>
            </Group>
          ))}
        </Groups>
      </Ribbon>

      <Workspace>
        <SidePanel>
          <PanelHeader>
            <PanelLead><svg width="14" height="9" viewBox="0 0 14 9"><path d="M7 0v9L0 4.5ZM13.5 0v9l-6.5-4.5Z" fill="#333" /></svg></PanelLead>
            <PanelTitle>BROWSER</PanelTitle>
            <Round />
          </PanelHeader>
          <Tree>
            {tree.map((r) => (
              <TreeRow key={r.label} $indent={r.indent}>
                <Expander>{r.open ? <Open /> : <Closed />}</Expander>
                <Tag $w={r.w}>
                  <TagIcon>{r.eye ? <Eye off={r.eye === "off"} /> : r.icon}</TagIcon>
                  {r.eye && <TagIcon $plain><Folder /></TagIcon>}
                  <TagText>{r.label}</TagText>
                </Tag>
              </TreeRow>
            ))}
          </Tree>
          <PanelHeader>
            <PanelLead />
            <PanelTitle>COMMENTS</PanelTitle>
            <Round plus />
          </PanelHeader>
        </SidePanel>
        <SheetHolder><Sheet /></SheetHolder>
        <NavBar>
          <svg width="20" height="20" viewBox="0 0 20 20" fill="#fff" stroke="#444" strokeWidth="1.1">
            <path d="M6 13 2 9.5Q.5 9 1 10.5L6 17l3 2h5l2-3 3-9q-1.5-2-2.5 0L15 10l1-7q-1.5-2-2.5 0L12.5 9 12 1.5q-1.5-1.5-2.5 0L9.5 9 7.5 2Q6 1 5.5 3L7 10Z" />
          </svg>
          <Lens win />
          <Lens />
        </NavBar>
      </Workspace>

      <SheetBar>
        <Thumb>
          <svg width="47" height="34" viewBox="0 0 47 34">
            <path d="M43 1h4v32h-4Z" fill="#a5a5a5" />
            <path d="M1.5 1.5h41v30h-41ZM23.5 31v-4h19M30 27v4M36 27v4M42 4h3M42 9h3M42 14h3M42 19h3M42 25h3" fill="none" stroke="#000" />
            <path d="M4 5l6-2v3l-3 2H4ZM18 3l3 1h3l2-1v2l-3 1-1 2-2-2h-2ZM36 3l5 2v3l-4-2ZM5 13h3v3H5ZM18 13h8v3.5h-8ZM37 13h4v3.5h-4ZM5 20l6 2v3H8ZM18 25v-2l3-3 3 3h2v2l-3-1h-2ZM36 22l5-2v3l-4 2Z" fill="#000" />
          </svg>
        </Thumb>
        <AddSheet>
          <svg width="28" height="28" viewBox="0 0 28 28"><path d="M14 0v28M.5 14.5h27" stroke="#4d4d4d" strokeWidth="5" /></svg>
        </AddSheet>
      </SheetBar>

      <Taskbar>
        <Weather>
          <svg width="36" height="36" viewBox="0 0 36 36">
            <path d="M27 14q1 12-9 13-8 1-15-2 5 9 12 9 12-1 12-15Z" fill="#f8a429" />
            <path d="M3 18q-3-1-3-4 0-4 4-4 2-4 6-3 5 0 6 5v6Z" fill="#a8c4f4" />
            <path d="M15 33q-3-1-2-4 1-2 4-2 2-5 6-3 3 0 4 3 3 0 3 3t-3 3Z" fill="#c3d6f7" />
            <Badge x={14} y={1} w={20} n="1" c="#ff99a4" />
          </svg>
          <WeatherText><b>34°C</b>Partly cloudy</WeatherText>
        </Weather>
        <StartBox>
          <svg width="29" height="29" viewBox="0 0 29 29">
            <defs><linearGradient id="win" gradientUnits="userSpaceOnUse" x1="0" y1="0" x2="29" y2="29"><stop stopColor="#7df0ff" /><stop offset="1" stopColor="#0f94fb" /></linearGradient></defs>
            <path d="M0 0h14v14H0ZM15 0h14v14H15ZM0 15h14v14H0ZM15 15h14v14H15Z" fill="url(#win)" />
          </svg>
        </StartBox>
        <SearchBox>
          <svg width="19" height="19" viewBox="0 0 19 19" fill="none" stroke="#e8e2e2" strokeWidth="2"><circle cx="8" cy="8" r="7" /><path d="m13 13 5 5" strokeWidth="2.6" /></svg>
          <span>Search</span>
          <svg width="51" height="32" viewBox="0 0 51 32">
            <defs><linearGradient id="bird"><stop stopColor="#b0756f" /><stop offset=".5" stopColor="#5b67cf" /><stop offset="1" stopColor="#8a63b8" /></linearGradient></defs>
            <ellipse cx="25" cy="29" rx="25" ry="2.8" fill="#c9875c" />
            <path d="M25 19v7l-5 2M28 19l-2 9" stroke="#efc21f" strokeWidth="2.2" fill="none" />
            <path d="M14 9q0 5 3 8 4 4 10 4 5-1 9-3 2 0 4 2-1-7-5-11-5-5-12-4-4 1-7 7Z" fill="url(#bird)" />
            <path d="M8 4q2-4 7 0 3 5 1 8h-2q1-5-3-6Z" fill="#29b5dc" />
            <path d="M7 0 11 1l-2 6-2-3Z" fill="#b97a55" />
          </svg>
        </SearchBox>
        <Apps>
          {apps.map((a, i) => <AppButton key={i} $state={a.state}>{a.icon}</AppButton>)}
        </Apps>
        <Tray>
          <Slot $w={38}><svg width="15" height="9" viewBox="0 0 15 9"><path d="m1 8 6.5-6.5L14 8" fill="none" stroke="#fff" strokeWidth="1.8" /></svg></Slot>
          <Slot $w={40}>
            <svg width="21" height="18" viewBox="0 0 21 18"><path d="M5 5q2-5 6-4 5 0 6 5v6H6Z" fill="#aaa" /><path d="M3 13q-3-1-3-4 1-3 4-3 2-3 5-1l5 8Z" fill="#eee" /><circle cx="15" cy="12" r="5.6" fill="#fce100" /><path d="M15 8.5v4M15 14v1.5" stroke="#222" strokeWidth="1.5" /></svg>
          </Slot>
          <TrayText $w={36} $align="center">ENG<br />IN</TrayText>
          <Slot $w={19} />
          <Slot $w={30}>
            <svg width="20" height="15" viewBox="0 0 20 15" fill="none" stroke="#fff" strokeWidth="1.5"><path d="M.8 5.5q9-9 18.4 0M3.5 8q6.500-6 13 0M6.3 10.5q3.7-3.5 7.4 0" /><circle cx="10" cy="13" r="1.3" fill="#fff" /></svg>
          </Slot>
          <Slot $w={30}>
            <svg width="20" height="14" viewBox="0 0 20 14" fill="none" stroke="#fff" strokeWidth="1.3"><path d="M.7 4.5h3L8 1v12L3.7 9.5h-3Z" /><path d="m12 4 7 7M19 4l-7 7" /></svg>
          </Slot>
          <Slot $w={20}>
            <svg width="20" height="13" viewBox="0 0 20 13" fill="none" stroke="#fff" strokeWidth="1.3"><rect x=".7" y=".7" width="16" height="11.6" rx="2.5" /><path d="M3 3h3v7H3Z" fill="#fff" stroke="none" /><path d="M18.5 4v5" strokeWidth="2" /></svg>
          </Slot>
          <TrayText $w={94} $align="right">21:18<br />20-04-2024</TrayText>
          <Slot $w={15} />
          <Slot $w={39}>
            <svg width="18" height="19" viewBox="0 0 18 19">
              <path d="M8 1q6 0 6 6v5l2 3H0l2-3V7q0-5 6-6ZM5 16.5h6q-3 4-6 0Z" fill="#fff" />
              <path d="M5.5 6.5H10l-4.500 5H10" fill="none" stroke="#222" strokeWidth="1.2" />
              <path d="M11.500 0H17v7h-5.500Z" fill="#262718" />
              <path d="M12 1h4l-4 4.500h4.500" fill="none" stroke="#fff" strokeWidth="1.3" />
            </svg>
          </Slot>
          <svg width="30" height="29" viewBox="0 0 30 29">
            <defs>
              <linearGradient id="cpa" x1="0" y1="0" x2="0" y2="1"><stop stopColor="#1c8bd8" /><stop offset=".5" stopColor="#3cc6a0" /><stop offset="1" stopColor="#f0c822" /></linearGradient>
              <linearGradient id="cpb" x1="0" y1="1" x2="1" y2="0"><stop stopColor="#ff6a6a" /><stop offset="1" stopColor="#a25cf0" /></linearGradient>
            </defs>
            <path d="M9 0h9q3 0 4 4l1 4h-6l-4 11H2Q-1 18 0 15L5 3q1-3 4-3Z" fill="url(#cpa)" />
            <path d="M15 0h3q4 1 4 7h-6Z" fill="#2258d8" />
            <path d="M18 8h8q3 0 2 4l-2 8H14Z" fill="url(#cpb)" />
            <rect x="6" y="19" width="23" height="10" rx="2" fill="#ffc000" />
            <text x="9" y="27.2" fontFamily={segoe} fontWeight="bold" fontSize="8.5" fill="#111">PRE</text>
          </svg>
        </Tray>
      </Taskbar>
    </Screen>
  );
}
